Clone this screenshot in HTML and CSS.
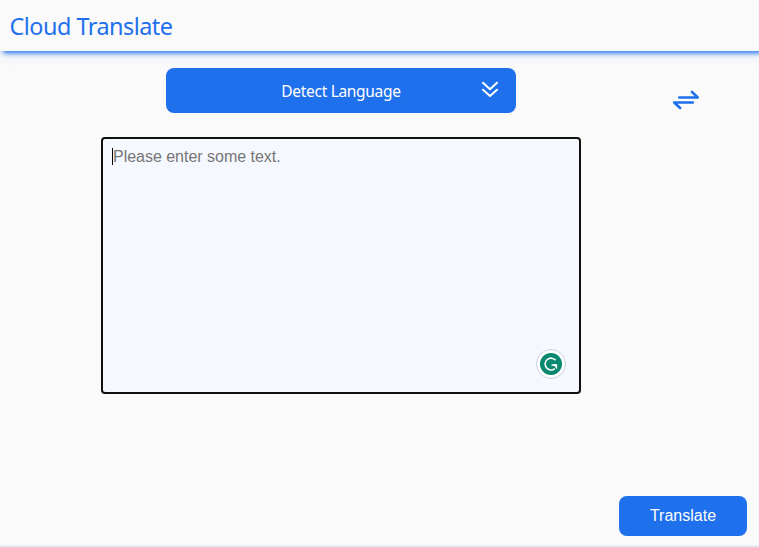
FILE: index.html
```
<!DOCTYPE html>
<html lang="en">
<head>
<meta charset="utf-8">
<title>Cloud Translate</title>
<link rel="stylesheet" href="styles.css">
</head>
<body>
<header class="header"><h1 class="title">Cloud Translate</h1></header>
<main class="main">
  <section class="source">
    <button class="language" type="button">
      <span class="language-label">Detect Language</span>
      <svg class="chevrons" width="18" height="18" viewBox="0 0 18 18"><path d="M2 2.7 9 9.2l7-6.5M2 9.7 9 16l7-6.3"/></svg>
    </button>
    <div class="editor">
      <span class="caret"></span><span class="placeholder">Please enter some text.</span>
      <span class="assistant">
        <svg width="22" height="22" viewBox="0 0 22 22"><circle cx="11" cy="11" r="11" fill="#07886f"/><path d="M15.6 7.3A5.9 5.9 0 1 0 14.8 15.6M11.5 12h4.8" fill="none" stroke="#fff" stroke-width="1.6"/><path d="M13 11.2h4.2v5.4z" fill="#fff"/></svg>
      </span>
    </div>
  </section>
  <aside class="swap">
    <svg width="28" height="20" viewBox="0 0 28 20"><path d="M7.3 7.5h18.4L20 1.9M20.8 12.5H2.2l5.9 5.4"/></svg>
  </aside>
</main>
<footer class="actions"><button class="translate" type="button">Translate</button></footer>
</body>
</html>
```
FILE: styles.css
```
* { box-sizing: border-box; }
body {
  margin: 0;
  height: 547px;
  overflow: hidden;
  display: flex;
  flex-direction: column;
  background: #fafafa;
  font-family: "Liberation Sans", Arial, sans-serif;
}
button { border: 0; padding: 0; background: #1f70ed; color: #fff; }
.header {
  flex: none;
  height: 51px;
  padding: 9px 10px 0 9.5px;
  background: #fafafa;
  box-shadow: 3px 2px 5px #1f70ed, 2px 4px 14px rgba(31, 112, 237, .1);
}
.title {
  margin: 0;
  font: 400 23.4px/35px "Noto Sans", "Open Sans", sans-serif;
  letter-spacing: -.5px;
  color: #1f70ed;
}
.main { display: flex; padding: 17px 0 0 101px; }
.source { width: 480px; }
.language {
  display: grid;
  grid-template-columns: 52px 1fr 52px;
  align-items: center;
  width: 350px;
  height: 45px;
  margin: 0 auto 24px 65px;
  border-radius: 8px;
}
.language-label {
  grid-column: 2;
  font: 15.5px/24px "Noto Sans", "Open Sans", sans-serif;
  letter-spacing: -.31px;
  padding-top: 1px;
}
.chevrons { justify-self: center; margin: 0 0 3px; }
.chevrons path, .swap path { fill: none; stroke: #fff; stroke-width: 2; stroke-linecap: round; stroke-linejoin: round; }
.editor {
  position: relative;
  display: flex;
  align-items: flex-start;
  height: 257px;
  padding: 8px 9px;
  border: 2px solid #101010;
  border-radius: 4px;
  background: #f5f9ff;
}
.caret { width: 1px; height: 17px; margin-top: 1px; background: #000; }
.placeholder { font-size: 16px; line-height: 20px; letter-spacing: -.02px; color: #757575; }
.assistant {
  position: absolute;
  right: 13px;
  bottom: 13px;
  display: grid;
  place-items: center;
  width: 30px;
  height: 30px;
  border: 1px solid #ccd0dc;
  border-radius: 50%;
  background: #fff;
}
.swap { margin: 22px 0 0 90.5px; }
.swap svg { display: block; }
.swap path { stroke: #1f70ed; stroke-width: 2.7; }
.actions {
  display: flex;
  justify-content: flex-end;
  margin-top: auto;
  padding: 0 12px 9px 0;
  border-bottom: 2px solid #e4ebf9;
}
.translate { width: 128px; height: 40px; border-radius: 8px; font: 16px/20px "Liberation Sans", Arial, sans-serif; }
```
